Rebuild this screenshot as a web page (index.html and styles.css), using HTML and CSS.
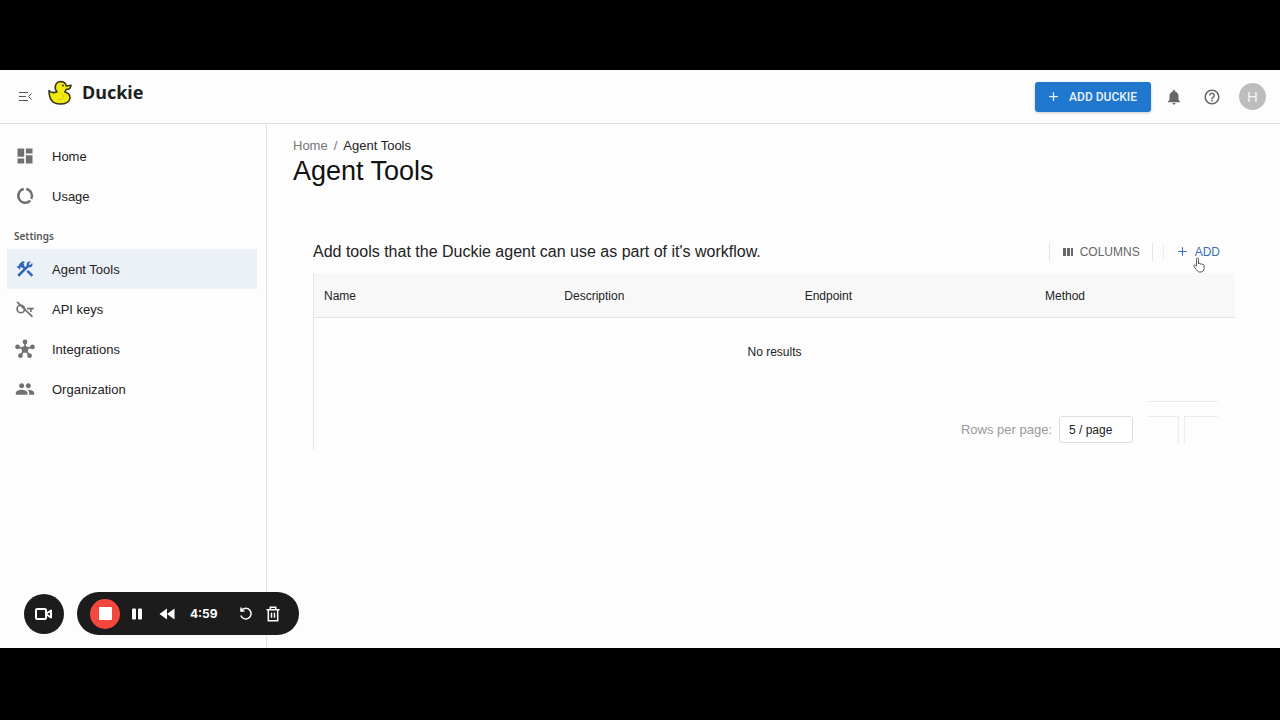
FILE: index.html
```
<!DOCTYPE html>
<html lang="en">
<head>
<meta charset="UTF-8" />
<meta name="viewport" content="width=device-width, initial-scale=1.0"/>
<title>Agent Tools - Duckie</title>
<link rel="stylesheet" href="styles.css">
</head>
<body>
<div class="app">
  <header class="top-bar">
    <button class="icon-btn" aria-label="Collapse menu">
      <svg class="menu-icon" viewBox="0 0 16 16"><path d="M2 3.500h9M2 7.500h7M2 11.500h9M14.500 4.500L11.500 7.500l3 3"/></svg>
    </button>
    <a class="brand" href="#">
      <svg class="duck" viewBox="0 0 24 25">
        <path d="M1 10.500c2 2.300 5.200 2.500 8 1.200C6 9 6.700 2 12.500 1.500c3.200 0 5.300 2 5.800 4.500l4.700-.8c0 2.500-1.700 4.200-5 4.300-.3 1.200-.7 1.900-1.200 2.500 3.700 1 5.200 2.700 5.200 5.500 0 4-4 6.500-10 6.500C5 24 1 20 1 10.500z"/>
        <path class="duck-wing" d="M15.500 15c1 3-1.500 5-5 4.500"/>
        <circle cx="15" cy="5.500" r="1"/>
      </svg>
      <span>Duckie</span>
    </a>
    <div class="top-actions">
      <button class="add-duckie">
        <svg viewBox="0 0 24 24"><path d="M19 13h-6v6h-2v-6H5v-2h6V5h2v6h6v2z"/></svg>
        Add Duckie
      </button>
      <button class="icon-btn" aria-label="Notifications">
        <svg class="bell" viewBox="0 0 24 24"><path d="M12 22c1.100 0 2-.9 2-2h-4c0 1.100.89 2 2 2zm6-6v-5c0-3.070-1.640-5.640-4.500-6.320V4c0-.83-.67-1.500-1.500-1.500s-1.500.67-1.500 1.500v.68C7.630 5.360 6 7.920 6 11v5l-2 2v1h16v-1l-2-2z"/></svg>
      </button>
      <button class="icon-btn" aria-label="Help">
        <svg class="help" viewBox="0 0 24 24"><path d="M11 18h2v-2h-2v2zm1-16C6.480 2 2 6.480 2 12s4.480 10 10 10 10-4.480 10-10S17.520 2 12 2zm0 18c-4.410 0-8-3.590-8-8s3.590-8 8-8 8 3.590 8 8-3.590 8-8 8zm0-14c-2.210 0-4 1.790-4 4h2c0-1.100.9-2 2-2s2 .9 2 2c0 2-3 1.750-3 5h2c0-2.250 3-2.500 3-5 0-2.210-1.790-4-4-4z"/></svg>
      </button>
      <button class="avatar" aria-label="Account">H</button>
    </div>
  </header>

  <div class="body">
    <nav class="sidebar">
      <a class="nav-item" href="#">
        <svg viewBox="0 0 24 24"><path d="M3 13h8V3H3v10zm0 8h8v-6H3v6zm10 0h8V11h-8v10zm0-18v6h8V3h-8z"/></svg>
        Home
      </a>
      <a class="nav-item" href="#">
        <svg class="ring" viewBox="0 0 24 24"><path d="M13.500 3.700a8.300 8.300 0 0 1 6 11.800M18.300 17.500A8.300 8.300 0 1 1 10.500 3.700"/></svg>
        Usage
      </a>
      <h2 class="nav-title">Settings</h2>
      <a class="nav-item active" href="#">
        <svg viewBox="0 0 24 24"><path d="M13.780 15.170l2.120-2.120 6 6-2.120 2.120z"/><path d="M17.500 10c1.930 0 3.500-1.570 3.500-3.500 0-.58-.16-1.120-.41-1.600l-2.700 2.700-1.490-1.490 2.700-2.700c-.48-.25-1.020-.41-1.600-.41C15.570 3 14 4.570 14 6.500c0 .41.080.8.210 1.160l-1.850 1.850-1.780-1.780.71-.71-1.410-1.410L12 3.490c-1.170-1.170-3.070-1.170-4.240 0L4.220 7.030l1.410 1.410H2.810l-.71.71 3.540 3.540.71-.71V9.150l1.410 1.410.71-.71 1.780 1.780-7.410 7.410 2.120 2.120L16.340 9.790c.36.130.75.210 1.160.210z"/></svg>
        Agent Tools
      </a>
      <a class="nav-item" href="#">
        <svg class="key" viewBox="0 0 24 24"><circle cx="7" cy="12" r="4.500"/><path d="M2.500 3.500l18.500 18M14.500 11.500h8M19 11.500v4"/></svg>
        API keys
      </a>
      <a class="nav-item" href="#">
        <svg class="hub" viewBox="0 0 24 24"><path d="M12 12V4M12 12L3 9.500M12 12l9-2.500M12 12l-5.500 8M12 12l5.500 8"/><circle cx="12" cy="12.500" r="4"/><circle cx="12" cy="3.500" r="2.800"/><circle cx="3" cy="9.500" r="2.800"/><circle cx="21" cy="9.500" r="2.800"/><circle cx="6.500" cy="20" r="2.800"/><circle cx="17.500" cy="20" r="2.800"/></svg>
        Integrations
      </a>
      <a class="nav-item" href="#">
        <svg viewBox="0 0 24 24"><path d="M16 11c1.660 0 2.990-1.340 2.990-3S17.660 5 16 5s-3 1.340-3 3 1.340 3 3 3zm-8 0c1.660 0 2.990-1.340 2.990-3S9.660 5 8 5 5 6.340 5 8s1.340 3 3 3zm0 2c-2.330 0-7 1.170-7 3.500V19h14v-2.500c0-2.330-4.670-3.500-7-3.500zm8 0c-.29 0-.62.020-.97.050 1.160.84 1.970 1.970 1.970 3.450V19h6v-2.500c0-2.330-4.670-3.500-7-3.500z"/></svg>
        Organization
      </a>
    </nav>

    <main class="content">
      <div class="breadcrumb">
        <a href="#">Home</a><span class="slash">/</span><span class="current">Agent Tools</span>
      </div>
      <h1>Agent Tools</h1>

      <section class="panel">
        <div class="panel-head">
          <p>Add tools that the Duckie agent can use as part of it's workflow.</p>
          <button class="tool-btn columns">
            <svg viewBox="0 0 12 12"><path d="M1 2h3v8H1zM5 2h3v8H5zM9 2h2v8H9z"/></svg>
            Columns
          </button>
          <button class="tool-btn add">
            <svg viewBox="0 0 24 24"><path d="M20 13h-7v7h-2v-7H4v-2h7V4h2v7h7v2z"/></svg>
            Add
            <svg class="pointer" viewBox="0 0 12 16"><path d="M3.500 9V2.200c0-1.600 2-1.600 2 0V7c.3-1 1.800-.8 1.900.2.500-.8 1.700-.5 1.800.4.800-.6 1.800 0 1.800 1v2.900c0 2-1.200 3.500-3.200 3.500H6.500c-1.600 0-2.300-1-3.200-2.500L1 9.500c-.6-1 .6-1.900 1.400-1.200z"/></svg>
          </button>
        </div>

        <div class="grid">
          <table>
            <thead>
              <tr><th>Name</th><th>Description</th><th>Endpoint</th><th>Method</th></tr>
            </thead>
            <tbody>
              <tr><td colspan="4">No results</td></tr>
            </tbody>
          </table>
          <div class="pager">
            <label for="page-size">Rows per page:</label>
            <select id="page-size">
              <option>5 / page</option>
              <option>10 / page</option>
              <option>25 / page</option>
            </select>
            <div class="page-nav">
              <button class="page-btn prev" aria-label="Previous page" disabled></button>
              <button class="page-btn next" aria-label="Next page" disabled></button>
            </div>
          </div>
        </div>
      </section>
    </main>
  </div>

  <!-- Floating recorder -->
  <div class="recorder">
    <button class="camera" aria-label="Camera">
      <svg viewBox="0 0 20 20"><rect x="2" y="5" width="10" height="10" rx="1"/><path d="M12.500 9.500L17 6.500v7l-4.500-3"/></svg>
    </button>
    <div class="record-bar">
      <button class="stop" aria-label="Stop recording"><span></span></button>
      <button class="rec-btn" aria-label="Pause"><svg viewBox="0 0 16 16"><rect x="3" y="2.500" width="4" height="11" rx="1"/><rect x="9" y="2.500" width="4" height="11" rx="1"/></svg></button>
      <button class="rec-btn" aria-label="Rewind"><svg viewBox="0 0 16 16"><path d="M8 2.500v11L.5 8zM15.500 2.500v11L8 8z"/></svg></button>
      <span class="time">4:59</span>
      <button class="rec-btn line restart" aria-label="Restart"><svg viewBox="0 0 16 16"><path d="M3.500 4.500a5.300 5.300 0 1 1-.7 5M3 1.500v3.500h3.500"/></svg></button>
      <button class="rec-btn line" aria-label="Delete"><svg viewBox="0 0 16 16"><path d="M1.500 3.800h13M5.300 3.500V1.300h5.400v2.200M3.300 4v10.700h9.400V4M6.500 6.800v5M9.500 6.800v5"/></svg></button>
    </div>
  </div>
</div>
</body>
</html>
```
FILE: styles.css
```
* {
    box-sizing: border-box;
}

body {
    margin: 0;
    min-height: 100vh;
    padding: 70px 0 72px;
    display: flex;
    background: #000;
    color: #222;
    font-family: "Liberation Sans", Arial, sans-serif;
    font-size: 13px;
}

button {
    border: none;
    background: none;
    padding: 0;
    font-family: inherit;
    cursor: pointer;
}

a {
    color: inherit;
    text-decoration: none;
}

svg {
    display: block;
    flex: none;
    fill: currentColor;
}

.app {
    position: relative;
    flex: 1;
    display: flex;
    flex-direction: column;
    background: #fdfdfd;
}

/* Header */
.top-bar {
    height: 54px;
    display: flex;
    align-items: center;
    padding: 0 14px 0 17px;
    border-bottom: 1px solid #e0e0e0;
}

.icon-btn {
    color: #666;
}

.menu-icon {
    width: 16px;
    height: 16px;
    fill: none;
    stroke: #555;
}

.brand {
    display: flex;
    align-items: center;
    gap: 10px;
    margin-left: 15px;
    padding-bottom: 8px;
    font-family: "Noto Sans", sans-serif;
    font-size: 18px;
    font-weight: 700;
    line-height: 25px;
    color: #1f1f1f;
}

.duck {
    width: 24px;
    height: 25px;
    fill: #f2ea0c;
    stroke: #33331c;
    stroke-width: 1.5;
    stroke-linejoin: round;
}

.duck circle {
    fill: #33331c;
    stroke: none;
}

.duck .duck-wing {
    stroke: #cfc40a;
    stroke-width: 1;
}

.top-actions {
    display: flex;
    align-items: center;
    margin-left: auto;
}

.add-duckie {
    display: flex;
    align-items: center;
    gap: 8px;
    height: 30px;
    padding: 0 14px 0 11px;
    margin-right: 14px;
    border-radius: 3px;
    background: #1f78cd;
    box-shadow: 0 1px 3px rgba(0,0,0,0.2);
    color: #e9f3fc;
    font-family: Roboto, sans-serif;
    font-size: 12px;
    font-weight: 500;
    text-transform: uppercase;
}

.add-duckie svg {
    width: 15px;
    height: 15px;
}

.bell {
    width: 18px;
    height: 18px;
    margin-right: 20px;
}

.help {
    width: 18px;
    height: 18px;
    margin-right: 18px;
}

.avatar {
    width: 27px;
    height: 27px;
    border-radius: 50%;
    background: #bdbdbd;
    color: #f5f5f5;
    font-size: 15px;
}

/* Sidebar */
.body {
    flex: 1;
    display: flex;
}

.sidebar {
    width: 267px;
    flex: none;
    padding: 12px 9px 0 7px;
    border-right: 1px solid #e2e2e2;
}

.nav-item {
    display: flex;
    align-items: center;
    gap: 17px;
    height: 40px;
    padding-left: 8px;
}

.nav-item svg {
    width: 20px;
    height: 20px;
    color: #707070;
}

.nav-item.active {
    background: #ebf1f7;
}

.nav-item.active svg {
    color: #2a65b8;
}

.nav-item .ring,
.nav-item .key {
    fill: none;
    stroke: currentColor;
    stroke-width: 2;
}

.nav-item .ring {
    stroke-width: 3;
}

.nav-item .hub path {
    stroke: currentColor;
    stroke-width: 2;
}

.nav-title {
    margin: 0;
    padding: 8px 7px 0;
    font-family: "Noto Sans", sans-serif;
    font-size: 10px;
    font-weight: 600;
    line-height: 25px;
    color: #555;
}

/* Page */
.content {
    flex: 1;
    min-width: 0;
    padding: 14px 45px 0 26px;
}

.breadcrumb {
    line-height: 16px;
    color: #777;
}

.slash {
    margin: 0 6px;
}

.current {
    color: #222;
}

h1 {
    margin: 0;
    font-size: 27px;
    font-weight: 400;
    line-height: 34px;
    color: #111;
}

.panel {
    margin: 46px 0 0 20px;
}

.panel-head {
    display: flex;
    align-items: center;
    height: 35px;
}

.panel-head p {
    flex: 1;
    margin: 0;
    font-size: 16px;
}

.tool-btn {
    position: relative;
    display: flex;
    align-items: center;
    gap: 6px;
    height: 18px;
    font-size: 12px;
    text-transform: uppercase;
}

.columns {
    padding: 0 12px;
    border: solid #e2e2e2;
    border-width: 0 1px;
    color: #666;
}

.columns svg {
    width: 12px;
    height: 12px;
}

.add {
    margin-left: 10px;
    padding: 0 15px 0 12px;
    border-left: 1px solid #eee;
    color: #3a6db5;
}

.add svg {
    width: 13px;
    height: 13px;
}

.add .pointer {
    position: absolute;
    left: 29px;
    top: 14px;
    width: 12px;
    height: 16px;
    fill: #fff;
    stroke: #555;
}

.grid {
    margin-top: 4px;
    border-left: 1px solid #e6e6e6;
}

table {
    width: 100%;
    table-layout: fixed;
    border-collapse: collapse;
}

th {
    height: 44px;
    padding: 2px 10px 0;
    background: #f8f8f9;
    border-bottom: 1px solid #e2e2e2;
    text-align: left;
    font-size: 12px;
    font-weight: 400;
}

th:last-child {
    width: 200px;
}

td {
    height: 69px;
    padding: 0;
    text-align: center;
    font-size: 12px;
}

.pager {
    display: flex;
    align-items: flex-end;
    justify-content: flex-end;
    height: 64px;
    padding: 0 17px 7px 0;
}

.pager label {
    margin-right: 7px;
    line-height: 27px;
    color: #999;
}

.pager select {
    appearance: none;
    width: 74px;
    height: 27px;
    padding: 0 9px;
    border: 1px solid #ddd;
    border-radius: 3px;
    background: #fff;
    color: #222;
    font-family: inherit;
    font-size: 12px;
}

.page-nav {
    display: flex;
    align-items: flex-end;
    gap: 5px;
    height: 42px;
    margin-left: 15px;
    border-top: 1px solid #ececec;
}

.page-btn {
    height: 27px;
    border: 0 solid #ececec;
    border-top-width: 1px;
}

.prev {
    width: 31px;
    border-right-width: 1px;
}

.next {
    width: 34px;
    border-left-width: 1px;
}

/* Recorder */
.recorder {
    position: absolute;
    left: 24px;
    bottom: 13px;
    display: flex;
    align-items: center;
    gap: 13px;
    color: #fff;
}

.camera {
    width: 40px;
    height: 40px;
    display: flex;
    align-items: center;
    justify-content: center;
    border-radius: 50%;
    background: #1c1c1c;
    color: #fff;
}

.camera svg {
    width: 20px;
    height: 20px;
    fill: none;
    stroke: #fff;
    stroke-width: 2;
    stroke-linejoin: round;
}

.record-bar {
    display: flex;
    align-items: center;
    height: 43px;
    padding: 0 18px 0 13px;
    border-radius: 22px;
    background: #1c1c1c;
}

.stop {
    width: 30px;
    height: 30px;
    display: flex;
    align-items: center;
    justify-content: center;
    border-radius: 50%;
    background: #f4483c;
}

.stop span {
    width: 13px;
    height: 13px;
    border-radius: 1px;
    background: #fff;
}

.rec-btn {
    margin-left: 9px;
    color: #fff;
}

.rec-btn + .rec-btn {
    margin-left: 14px;
}

.rec-btn svg {
    width: 16px;
    height: 16px;
}

.rec-btn.line svg {
    fill: none;
    stroke: #fff;
    stroke-width: 1.5;
}

.time {
    margin: 0 11px 0 15px;
    font-family: Inter, sans-serif;
    font-size: 12px;
    font-weight: 700;
}

.restart + .rec-btn {
    margin-left: 11px;
}
```
